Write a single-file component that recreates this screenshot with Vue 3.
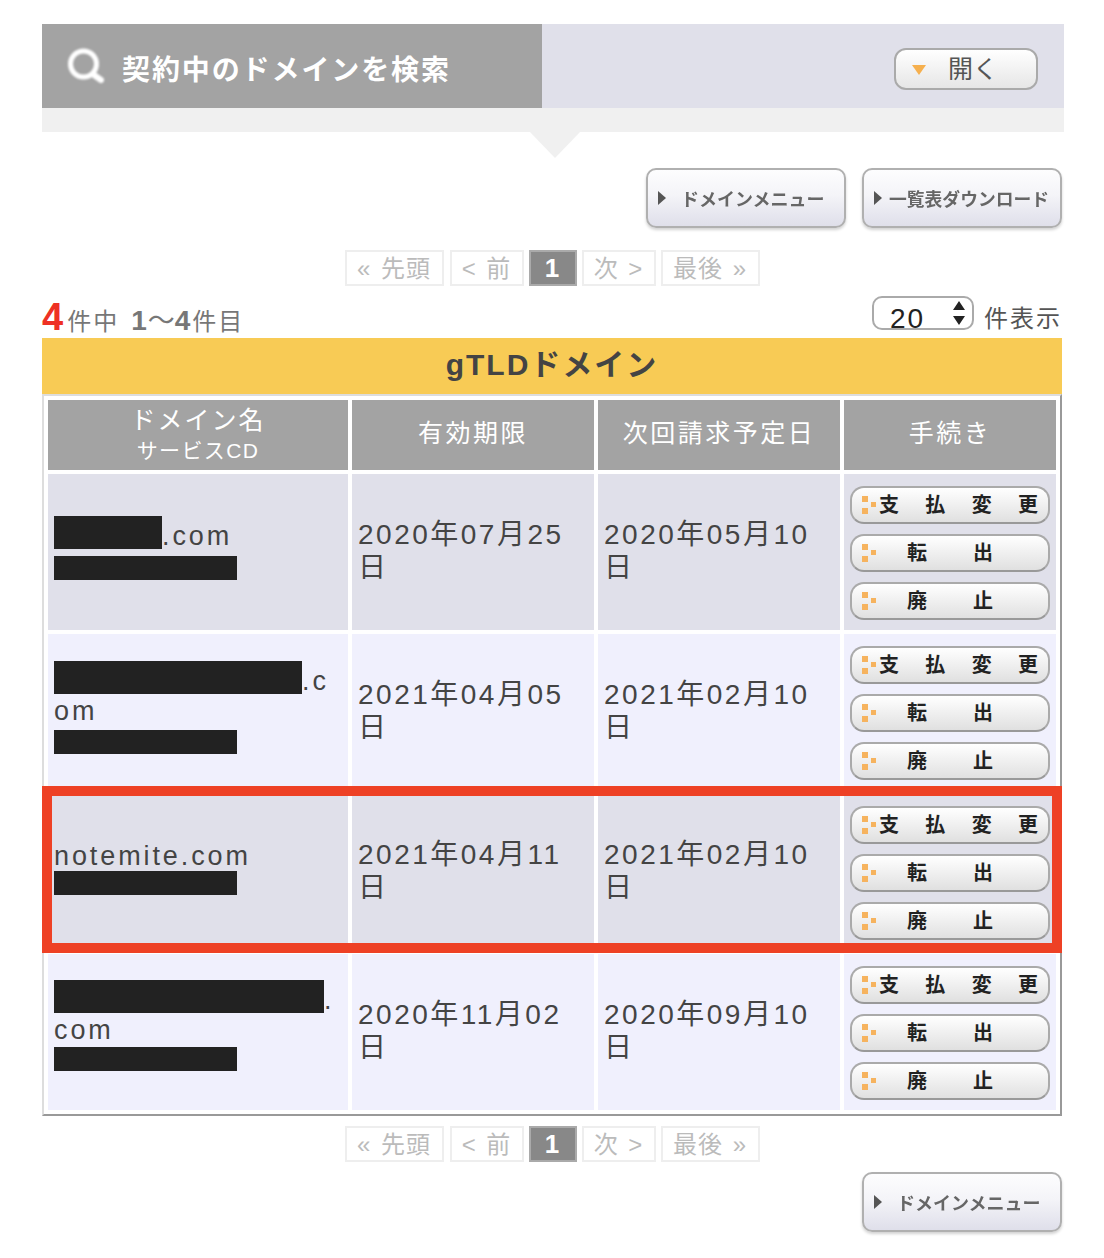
<script setup>
const rows = [
  { id: 1, first: 108, tail: '.com', second: '', h1: 40, h2: 0, pb: 8, expiry: '2020年07月25', bill: '2020年05月10' },
  { id: 2, first: 248, tail: '.c', second: 'om', h1: 36, h2: 33, pb: 10, expiry: '2021年04月05', bill: '2021年02月10' },
  { id: 3, first: 0, tail: 'notemite.com', second: '', h1: 32, h2: 0, pb: 10, expiry: '2021年04月11', bill: '2021年02月10' },
  { id: 4, first: 270, tail: '.', second: 'com', h1: 36, h2: 31, pb: 14, expiry: '2020年11月02', bill: '2020年09月10' }
]
const actions = [
  { name: 'pay', chars: ['支', '払', '変', '更'] },
  { name: 'move', chars: ['転', '出'] },
  { name: 'end', chars: ['廃', '止'] }
]
const pager = [
  { label: '« 先頭', w: 99 },
  { label: '< 前', w: 74 },
  { label: '1', w: 48, on: true },
  { label: '次 >', w: 74 },
  { label: '最後 »', w: 99 }
]
</script>

<template>
  <div class="page">
    <section class="search">
      <div class="search-title">
        <svg class="lens" viewBox="0 0 40 38" width="40" height="38">
          <circle cx="15.5" cy="16" r="13" fill="none" stroke="#fff" stroke-width="5" />
          <path d="M26 27 L33 32" stroke="#fff" stroke-width="6" stroke-linecap="round" />
        </svg>
        <span class="search-text">契約中のドメインを検索</span>
      </div>
      <div class="search-side">
        <button class="open"><i class="open-arrow"></i><span>開く</span></button>
      </div>
    </section>
    <div class="band"></div>

    <div class="menu-row">
      <button class="menu"><i class="play"></i><span>ドメインメニュー</span></button>
      <button class="menu small"><i class="play"></i><span>一覧表ダウンロード</span></button>
    </div>

    <nav class="pager">
      <span v-for="p in pager" :key="p.label" class="pg" :class="{ on: p.on }" :style="{ width: p.w + 'px' }">{{ p.label }}</span>
    </nav>

    <div class="count-row">
      <div class="count"><b class="total">4</b><span class="c1">件中</span><b class="range first">1</b><span class="wave">〜</span><b class="range">4</b><span class="c2">件目</span></div>
      <div class="perpage">
        <span class="select"><span class="select-val">20</span><svg viewBox="0 0 14 26" width="14" height="26"><path d="M7 1 L13 10 H1 Z M7 25 L1 16 H13 Z" fill="#222" /></svg></span>
        <span class="perpage-label">件表示</span>
      </div>
    </div>

    <div class="tld">gTLDドメイン</div>

    <div class="table-wrap">
      <table class="domains">
        <colgroup><col class="c-a" /><col class="c-b" /><col class="c-b" /><col class="c-c" /></colgroup>
        <thead>
          <tr>
            <th><span class="th-main">ドメイン名</span><span class="th-sub">サービスCD</span></th>
            <th>有効期限</th>
            <th>次回請求予定日</th>
            <th>手続き</th>
          </tr>
        </thead>
        <tbody>
          <tr v-for="r in rows" :key="r.id">
            <td class="name" :style="{ paddingBottom: r.pb + 'px' }">
              <div class="name-line" :style="{ height: r.h1 + 'px' }"><span v-if="r.first" class="mask" :style="{ width: r.first + 'px' }"></span><span :class="r.first ? 'tail' : 'plain'">{{ r.tail }}</span></div>
              <div v-if="r.second" class="name-line" :style="{ height: r.h2 + 'px' }">{{ r.second }}</div>
              <div class="mask-b"></div>
            </td>
            <td class="date">{{ r.expiry }}<br />日</td>
            <td class="date">{{ r.bill }}<br />日</td>
            <td class="acts">
              <div class="act-list">
                <button v-for="a in actions" :key="a.name" class="act" :class="a.name">
                  <svg class="dots" viewBox="0 0 15 20" width="15" height="20"><rect x="0" y="1" width="6" height="6" fill="#f6b35e" /><rect x="0" y="13" width="6" height="6" fill="#f6b35e" /><rect x="9" y="7" width="5" height="5" fill="#f6b35e" /></svg>
                  <span class="act-chars"><span v-for="c in a.chars" :key="c">{{ c }}</span></span>
                </button>
              </div>
            </td>
          </tr>
        </tbody>
      </table>
      <div class="mark"></div>
    </div>

    <nav class="pager bottom">
      <span v-for="p in pager" :key="p.label" class="pg" :class="{ on: p.on }" :style="{ width: p.w + 'px' }">{{ p.label }}</span>
    </nav>

    <div class="menu-row last">
      <button class="menu"><i class="play"></i><span>ドメインメニュー</span></button>
    </div>
  </div>
</template>

<style>
html, body { margin: 0; background: #fff; }
</style>

<style scoped>
.page {
  width: 1104px;
  height: 1258px;
  box-sizing: border-box;
  padding: 24px 0 0 42px;
  overflow: hidden;
  font-family: "Liberation Sans", "Noto Sans CJK JP", sans-serif;
  color: #444;
}
button { font-family: inherit; padding: 0; cursor: pointer; }

.search { display: flex; width: 1022px; height: 84px; background: #e0e0ea; }
.search-title {
  width: 500px;
  box-sizing: border-box;
  padding-left: 26px;
  background: #a3a3a3;
  display: flex;
  align-items: center;
  gap: 14px;
  color: #fff;
  font-size: 28px;
  font-weight: 700;
  letter-spacing: 1.9px;
}
.search-text { padding-top: 3px; }
.lens { filter: blur(0.8px); margin-top: 2px; }
.search-side { flex: 1; display: flex; justify-content: flex-end; align-items: center; padding: 6px 26px 0 0; }
.open {
  width: 144px;
  height: 42px;
  box-sizing: border-box;
  border: 2px solid #aaa;
  border-radius: 12px;
  background: linear-gradient(#fff, #e6e6e6);
  display: flex;
  align-items: center;
  color: #555;
  font-size: 25px;
  line-height: 1;
}
.open-arrow {
  width: 0; height: 0;
  margin: 2px 22px 0 16px;
  border-left: 7px solid transparent;
  border-right: 7px solid transparent;
  border-top: 10px solid #f6b04e;
}
.band { position: relative; width: 1022px; height: 24px; background: #f0f0f0; }
.band::after {
  content: "";
  position: absolute;
  left: 488px;
  top: 24px;
  border-left: 25px solid transparent;
  border-right: 25px solid transparent;
  border-top: 26px solid #f0f0f0;
}

.menu-row { width: 1020px; margin-top: 36px; display: flex; justify-content: flex-end; gap: 16px; }
.menu-row.last { margin-top: 10px; }
.menu {
  width: 200px;
  height: 60px;
  box-sizing: border-box;
  border: 2px solid #b0b0b0;
  border-radius: 10px;
  background: linear-gradient(#fdfdfe 0%, #f4f4f8 45%, #dfdfea 100%);
  box-shadow: 0 2px 3px rgba(0, 0, 0, 0.18);
  display: flex;
  align-items: center;
  padding-left: 10px;
  color: #666;
  font-size: 18px;
  font-weight: 700;
  white-space: nowrap;
}
.menu span { filter: blur(0.4px); margin-left: 15px; }
.menu.small { font-size: 17.8px; }
.menu.small span { margin-left: 7px; }
.play {
  width: 0; height: 0;
  border-top: 7px solid transparent;
  border-bottom: 7px solid transparent;
  border-left: 8px solid #555;
}

.pager { width: 1020px; margin-top: 22px; display: flex; justify-content: center; gap: 5px; }
.pager.bottom { margin-top: 10px; }
.pg {
  height: 36px;
  box-sizing: border-box;
  border: 2px solid #eee;
  color: #bbb;
  font-size: 24px;
  line-height: 33px;
  letter-spacing: 1px;
  word-spacing: 2px;
  text-align: center;
  white-space: pre;
}
.pg:first-child { margin-right: 1px; }
.pg.on { background: #888; border-color: #aaa; color: #fff; font-weight: 700; font-size: 26px; }

.count-row { width: 1020px; height: 52px; display: flex; justify-content: space-between; align-items: flex-end; }
.count { display: flex; align-items: baseline; color: #777; font-size: 24px; line-height: 36px; margin-bottom: -2px; letter-spacing: 2px; }
.total { color: #ee3124; font-size: 38px; line-height: 36px; letter-spacing: 0; }
.c1 { margin-left: 4px; }
.range { font-size: 28px; letter-spacing: 0; }
.range.first { margin-left: 12px; }
.wave { letter-spacing: 0; font-size: 27px; margin-left: 1px; }
.c2 { margin-left: 2px; }
.perpage { display: flex; align-items: flex-end; }
.select {
  width: 102px;
  height: 34px;
  margin-bottom: 8px;
  box-sizing: border-box;
  border: 2px solid #aaa;
  border-radius: 10px;
  display: flex;
  align-items: flex-start;
  justify-content: space-between;
  padding: 2px 6px 0 16px;
  overflow: hidden;
  background: #fff;
}
.select-val { font-size: 28px; line-height: 37px; color: #222; letter-spacing: 2px; }
.perpage-label { margin: 0 0 0 10px; color: #555; font-size: 24px; letter-spacing: 2px; line-height: 38px; }

.tld {
  width: 1020px;
  height: 56px;
  background: #f8cb55;
  text-align: center;
  font-size: 30px;
  font-weight: 700;
  line-height: 54px;
  letter-spacing: 2px;
  color: #444;
}

.table-wrap { position: relative; width: 1020px; }
.domains {
  width: 1020px;
  table-layout: fixed;
  border-collapse: separate;
  border-spacing: 4px;
  border-style: solid;
  border-width: 2px;
  border-color: #ddd #999 #999 #ddd;
  box-sizing: border-box;
}
.c-a { width: 300px; }
.c-b { width: 242px; }
.c-c { width: 212px; }
th {
  height: 70px;
  box-sizing: border-box;
  padding: 0 0 4px;
  background: #a3a3a3;
  color: #fff;
  font-size: 25px;
  font-weight: 400;
  letter-spacing: 2.5px;
  line-height: 30px;
}
.th-main, .th-sub { display: block; }
.th-main { margin-top: 4px; letter-spacing: 2px; }
.th-sub { font-size: 21px; letter-spacing: 1.4px; line-height: 28px; margin-top: 2px; }
td { height: 156px; box-sizing: border-box; padding: 0 6px; background: #e0e0ea; vertical-align: middle; }
tbody tr:nth-child(even) td { background: #f0f0fd; }
.name { font-size: 27px; line-height: 28px; letter-spacing: 2.9px; color: #444; }
.name-line { display: flex; align-items: flex-start; white-space: nowrap; }
.mask { flex: none; height: 33px; background: #222; }
.tail { margin-top: 6px; }
.plain { margin-top: 3px; }
.mask-b { width: 183px; height: 24px; background: #222; }
.date { padding-bottom: 2px; font-size: 28px; letter-spacing: 2.5px; line-height: 33px; color: #444; white-space: nowrap; }
.acts { padding: 1px 6px 0; }
.act-list { display: flex; flex-direction: column; gap: 10px; }
.act {
  position: relative;
  width: 200px;
  height: 38px;
  box-sizing: border-box;
  border: 2px solid #aaa;
  border-bottom-color: #999;
  border-radius: 14px;
  background: linear-gradient(#fff, #e0e0e0);
  display: flex;
  align-items: center;
  color: #222;
  font-size: 20px;
  font-weight: 700;
  line-height: 1;
}
.dots { position: absolute; left: 10px; top: 7px; }
.act-chars { position: absolute; display: flex; justify-content: space-between; top: 7px; }
.pay .act-chars { left: 27px; right: 10px; }
.move .act-chars, .end .act-chars { left: 55px; right: 55px; }

.mark {
  position: absolute;
  left: 0;
  right: 0;
  top: 392px;
  height: 167px;
  box-sizing: border-box;
  border: 10px solid #ee4125;
  pointer-events: none;
}
</style>
